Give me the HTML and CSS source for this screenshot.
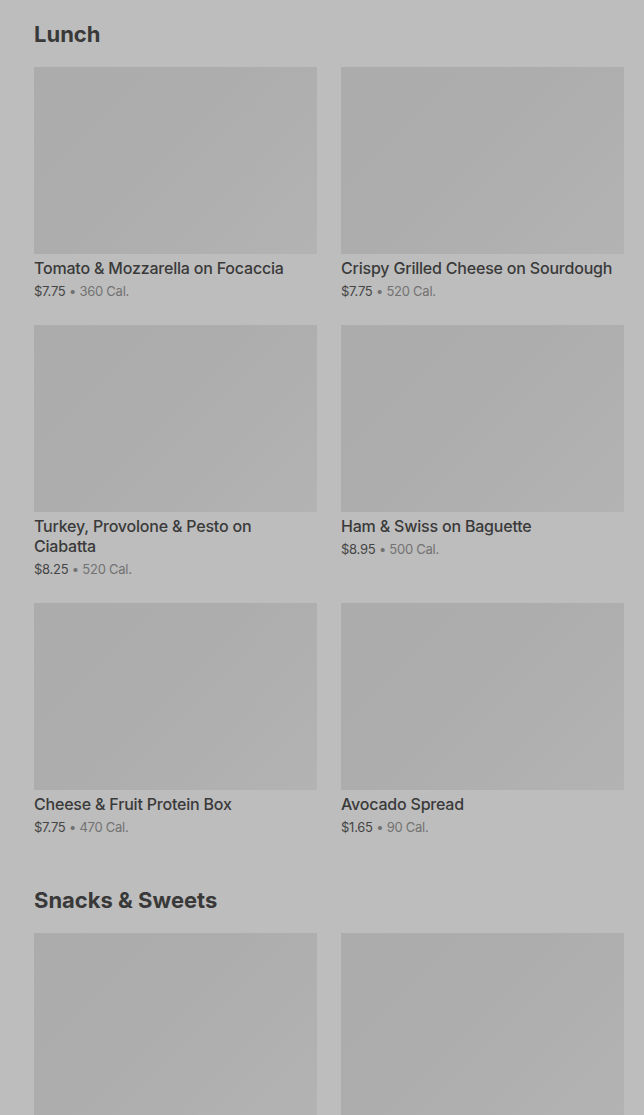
FILE: index.html
```html
<!DOCTYPE html>
<html>
<head lang="en">
    <meta charset="UTF-8">
    <title>Menu</title>
    <link rel="stylesheet" href="styles.css">
</head>
<body>
<div class="menu">
    <div class="section">
        <h2 class="heading">Lunch</h2>
        <ul class="grid">
            <li class="item">
                <div class="pic"></div>
                <div class="name">Tomato &amp; Mozzarella on Focaccia</div>
                <div class="meta"><span class="price">$7.75</span> • 360 Cal.</div>
            </li>
            <li class="item">
                <div class="pic"></div>
                <div class="name">Crispy Grilled Cheese on Sourdough</div>
                <div class="meta"><span class="price">$7.75</span> • 520 Cal.</div>
            </li>
            <li class="item">
                <div class="pic"></div>
                <div class="name">Turkey, Provolone &amp; Pesto on Ciabatta</div>
                <div class="meta"><span class="price">$8.25</span> • 520 Cal.</div>
            </li>
            <li class="item">
                <div class="pic"></div>
                <div class="name">Ham &amp; Swiss on Baguette</div>
                <div class="meta"><span class="price">$8.95</span> • 500 Cal.</div>
            </li>
            <li class="item">
                <div class="pic"></div>
                <div class="name">Cheese &amp; Fruit Protein Box</div>
                <div class="meta"><span class="price">$7.75</span> • 470 Cal.</div>
            </li>
            <li class="item">
                <div class="pic"></div>
                <div class="name">Avocado Spread</div>
                <div class="meta"><span class="price">$1.65</span> • 90 Cal.</div>
            </li>
        </ul>
    </div>
    <div class="section">
        <h2 class="heading">Snacks &amp; Sweets</h2>
        <ul class="grid">
            <li class="item">
                <div class="pic"></div>
            </li>
            <li class="item">
                <div class="pic"></div>
            </li>
        </ul>
    </div>
</div>
</body>
</html>
```

FILE: styles.css
```css
* {
    margin: 0;
    padding: 0;
}

body {
    background: #bdbdbd;
    font-family: Inter, "Liberation Sans", sans-serif;
    color: #383838;
}

ul {
    list-style: none;
}

.menu {
    padding: 20px 20px 0 34px;
}

.section {
    margin-bottom: 50px;
}

.heading {
    font-size: 22px;
    line-height: 28px;
    font-weight: 700;
    color: #393939;
    margin-bottom: 19px;
}

.grid {
    display: grid;
    grid-template-columns: 1fr 1fr;
    column-gap: 24px;
    row-gap: 25px;
}

.pic {
    height: 187px;
    background: linear-gradient(135deg, #acacac 0%, #adadad 45%, #b3b3b3 100%);
    margin-bottom: 4px;
}

.name {
    font-size: 16px;
    line-height: 20px;
    font-weight: 500;
    letter-spacing: -0.2px;
    color: #3a3a3a;
}

.meta {
    font-size: 13px;
    line-height: 18px;
    letter-spacing: -0.25px;
    margin-top: 4px;
    color: #727272;
}

.price {
    color: #454545;
}
```
